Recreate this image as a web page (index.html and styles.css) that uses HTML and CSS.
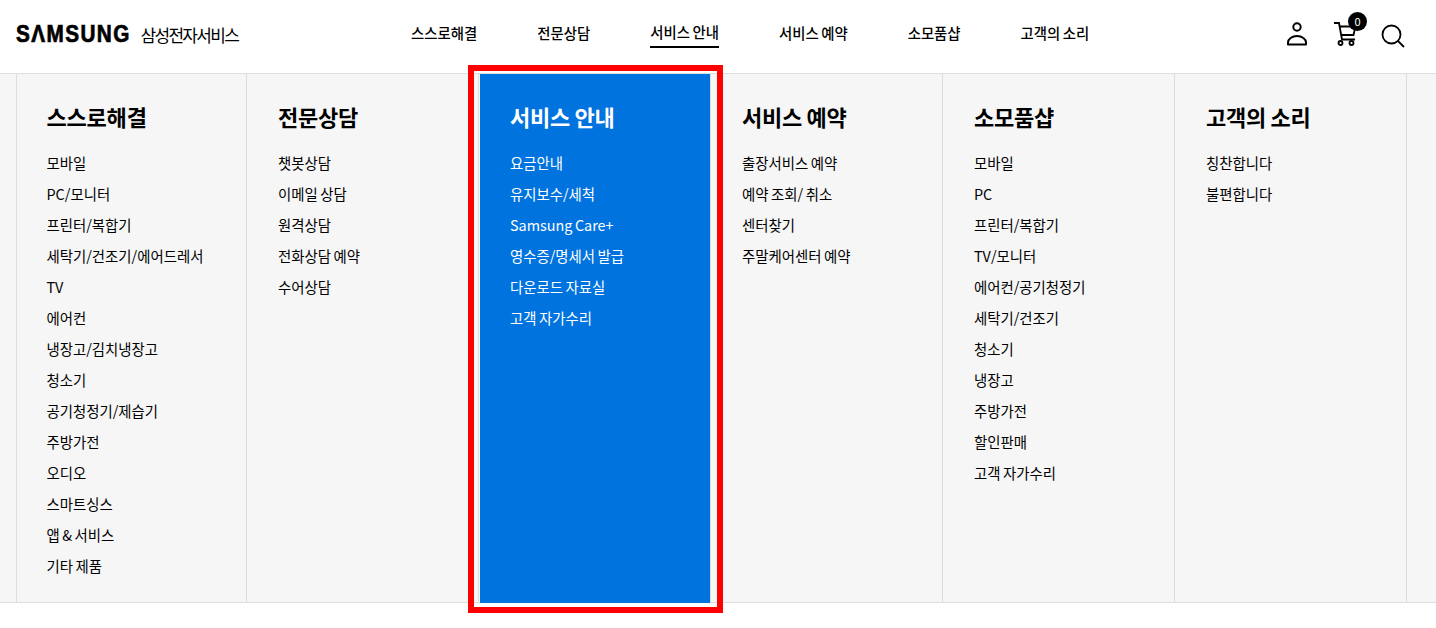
FILE: index.html
```html
<!DOCTYPE html>
<html lang="ko">
<head>
    <meta charset="UTF-8">
    <meta name="viewport" content="width=device-width, initial-scale=1.0">
    <title>삼성전자서비스</title>
    <link rel="stylesheet" href="styles.css">
</head>
<body>
    <header class="header">
        <a class="logo" href="#"><span class="logo-mark">SΛMSUNG</span><span class="logo-sub">삼성전자서비스</span></a>
        <nav class="nav">
            <a href="#">스스로해결</a>
            <a href="#">전문상담</a>
            <a href="#" class="on">서비스 안내</a>
            <a href="#">서비스 예약</a>
            <a href="#">소모품샵</a>
            <a href="#">고객의 소리</a>
        </nav>
        <div class="icons">
            <a href="#" class="icon">
                <svg width="24" height="24" viewBox="0 0 24 24" fill="none" stroke="#000" stroke-width="2">
                    <circle cx="12" cy="4" r="3.7"/>
                    <path d="M3 21.5v-2c0-3.5 4-6.500 9-6.500s9 3 9 6.500v2z" stroke-linejoin="round"/>
                </svg>
            </a>
            <a href="#" class="icon">
                <svg width="24" height="24" viewBox="0 0 24 24" fill="none" stroke="#000" stroke-width="1.800">
                    <path d="M1 0h5l3 16.500h13"/>
                    <path d="M6.500 3.500h16l-2 8.500H8.500"/>
                    <circle cx="7.500" cy="20" r="2"/>
                    <circle cx="18.500" cy="20" r="2"/>
                </svg>
                <span class="badge">0</span>
            </a>
            <a href="#" class="icon">
                <svg width="24" height="24" viewBox="0 0 24 24" fill="none" stroke="#000" stroke-width="1.800">
                    <circle cx="10.500" cy="11.500" r="9"/>
                    <path d="M17 18l6 6"/>
                </svg>
            </a>
        </div>
    </header>

    <div class="menu">
        <div class="col">
            <h2>스스로해결</h2>
            <ul>
                <li>모바일</li>
                <li>PC/모니터</li>
                <li>프린터/복합기</li>
                <li>세탁기/건조기/에어드레서</li>
                <li>TV</li>
                <li>에어컨</li>
                <li>냉장고/김치냉장고</li>
                <li>청소기</li>
                <li>공기청정기/제습기</li>
                <li>주방가전</li>
                <li>오디오</li>
                <li>스마트싱스</li>
                <li>앱 &amp; 서비스</li>
                <li>기타 제품</li>
            </ul>
        </div>
        <div class="col">
            <h2>전문상담</h2>
            <ul>
                <li>챗봇상담</li>
                <li>이메일 상담</li>
                <li>원격상담</li>
                <li>전화상담 예약</li>
                <li>수어상담</li>
            </ul>
        </div>
        <div class="col col-active">
            <div class="col-fill">
                <h2>서비스 안내</h2>
                <ul>
                    <li>요금안내</li>
                    <li>유지보수/세척</li>
                    <li>Samsung Care+</li>
                    <li>영수증/명세서 발급</li>
                    <li>다운로드 자료실</li>
                    <li>고객 자가수리</li>
                </ul>
            </div>
        </div>
        <div class="col">
            <h2>서비스 예약</h2>
            <ul>
                <li>출장서비스 예약</li>
                <li>예약 조회/ 취소</li>
                <li>센터찾기</li>
                <li>주말케어센터 예약</li>
            </ul>
        </div>
        <div class="col">
            <h2>소모품샵</h2>
            <ul>
                <li>모바일</li>
                <li>PC</li>
                <li>프린터/복합기</li>
                <li>TV/모니터</li>
                <li>에어컨/공기청정기</li>
                <li>세탁기/건조기</li>
                <li>청소기</li>
                <li>냉장고</li>
                <li>주방가전</li>
                <li>할인판매</li>
                <li>고객 자가수리</li>
            </ul>
        </div>
        <div class="col col-last">
            <h2>고객의 소리</h2>
            <ul>
                <li>칭찬합니다</li>
                <li>불편합니다</li>
            </ul>
        </div>
        <div class="highlight"></div>
    </div>
</body>
</html>
```

FILE: styles.css
```css
* {
    box-sizing: border-box;
}
html, body {
    min-height: 100vh;
}
body {
    margin: 0;
    background-color: #fff;
    color: #000;
    font-family: "Noto Sans CJK KR", "Noto Sans", sans-serif;
}
a {
    text-decoration: none;
    color: inherit;
}
h2, ul {
    margin: 0;
    padding: 0;
}
ul {
    list-style: none;
}
.header {
    display: flex;
    height: 74px;
    padding-left: 16px;
    background-color: #fff;
    border-bottom: 1px solid #ddd;
}
.logo {
    display: flex;
    align-items: center;
    width: 395px;
    height: 69px;
}
.logo-mark {
    display: inline-block;
    font-family: "Liberation Sans", sans-serif;
    font-weight: 700;
    font-size: 23px;
    letter-spacing: 1.6px;
    -webkit-text-stroke: 0.7px #000;
    transform: scaleX(0.9);
    transform-origin: left center;
}
.logo-sub {
    margin-left: -3px;
    font-size: 17px;
    letter-spacing: -1.7px;
}
.nav {
    display: flex;
    gap: 60px;
    height: 48px;
}
.nav a {
    display: flex;
    align-items: center;
    height: 48px;
    padding-top: 16px;
    font-size: 14.4px;
    font-weight: 500;
    word-spacing: -1.5px;
    white-space: nowrap;
}
.nav a.on {
    border-bottom: 2px solid #000;
}
.icons {
    display: flex;
    gap: 24px;
    margin-left: auto;
    padding: 23px 31px 0 0;
}
.icon {
    position: relative;
    display: block;
    width: 24px;
    height: 24px;
}
.icon svg {
    overflow: visible;
}
.badge {
    position: absolute;
    top: -11px;
    left: 15px;
    width: 19px;
    height: 19px;
    border-radius: 50%;
    background-color: #000;
    color: #fff;
    font-size: 11px;
    line-height: 19px;
    text-align: center;
}
.menu {
    position: relative;
    display: flex;
    height: 529px;
    padding-left: 16px;
    background-color: #f6f6f6;
    border-bottom: 1px solid #ddd;
}
.col {
    width: 232px;
    padding: 26px 0 0 31px;
    border-left: 1px solid #ddd;
}
.col:first-child {
    width: 230px;
    padding-left: 29.5px;
}
.col-last {
    width: 233px;
    border-right: 1px solid #ddd;
}
.col-active {
    padding: 0 0 0 1px;
}
.col-fill {
    height: 529px;
    padding: 26px 0 0 30px;
    background-color: #0073de;
    color: #fff;
}
.col h2 {
    margin-bottom: 15px;
    font-size: 22px;
    font-weight: 700;
    line-height: 32px;
    letter-spacing: -0.2px;
    word-spacing: -1.5px;
}
.col li {
    height: 31px;
    font-size: 14.4px;
    line-height: 31px;
    word-spacing: -1.5px;
    white-space: nowrap;
}
.highlight {
    position: absolute;
    left: 468px;
    top: -9px;
    width: 255px;
    height: 548px;
    border: 6px solid #f00;
}
```
